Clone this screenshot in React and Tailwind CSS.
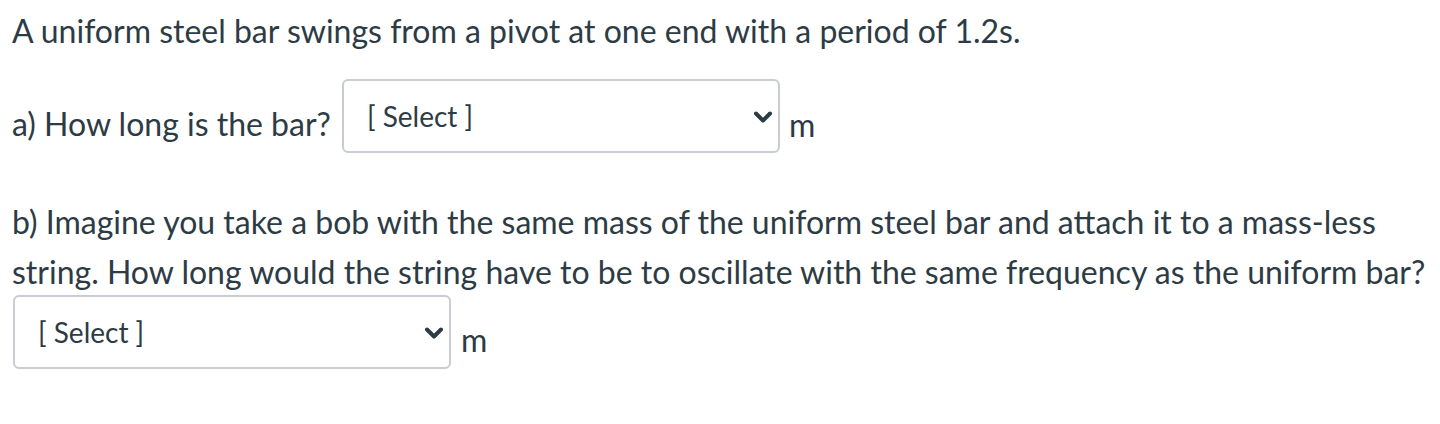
import { useState } from 'react'

function Valaszto({ ertek, valtoztat }) {
  return (
    <div className="relative inline-block w-[438px] h-[74px] align-top">
      <select
        value={ertek}
        onChange={e => valtoztat(e.target.value)}
        className="appearance-none block w-full h-full rounded-[6px] border-2 border-[#c7cdd1] bg-white pl-[23px] pr-10 text-[28px] text-[#2d3b45] outline-none"
        style={{ fontFamily: 'Lato, "Liberation Sans", sans-serif' }}
      >
        <option value="">[ Select ]</option>
        <option value="0.54">0.54</option>
        <option value="0.36">0.36</option>
      </select>
      <svg className="pointer-events-none absolute right-[7px] top-[32px]" width="20" height="13" viewBox="0 0 20 13">
        <path d="M3 2.5 L10 9.5 L17 2.5" fill="none" stroke="#2d3b45" strokeWidth="4" strokeLinecap="round" strokeLinejoin="round" />
      </svg>
    </div>
  )
}

export default function App() {
  const [a, setA] = useState('')
  const [b, setB] = useState('')

  return (
    <div className="w-[1440px] h-[424px] bg-white px-[12px] pt-[6px] text-[32px] leading-[50px] text-[#2d3b45]"
         style={{ fontFamily: 'Lato, "Liberation Sans", sans-serif' }}>
      <p>A uniform steel bar swings from a pivot at one end with a period of 1.2s.</p>

      <div className="mt-[23px] flex items-start">
        <span className="mt-[20px]">a) How long is the bar?</span>
        <span className="ml-[11px]"><Valaszto ertek={a} valtoztat={setA} /></span>
        <span className="ml-[9px] mt-[21px]">m</span>
      </div>

      <p className="mt-[44px]">
        b) Imagine you take a bob with the same mass of the uniform steel bar and attach it to a mass-less string. How long would the string have to be to oscillate with the same frequency as the uniform bar?
      </p>
      <div className="-mt-[2px] flex items-start">
        <span className="ml-[1px]"><Valaszto ertek={b} valtoztat={setB} /></span>
        <span className="ml-[10px] mt-[20px]">m</span>
      </div>
    </div>
  )
}
